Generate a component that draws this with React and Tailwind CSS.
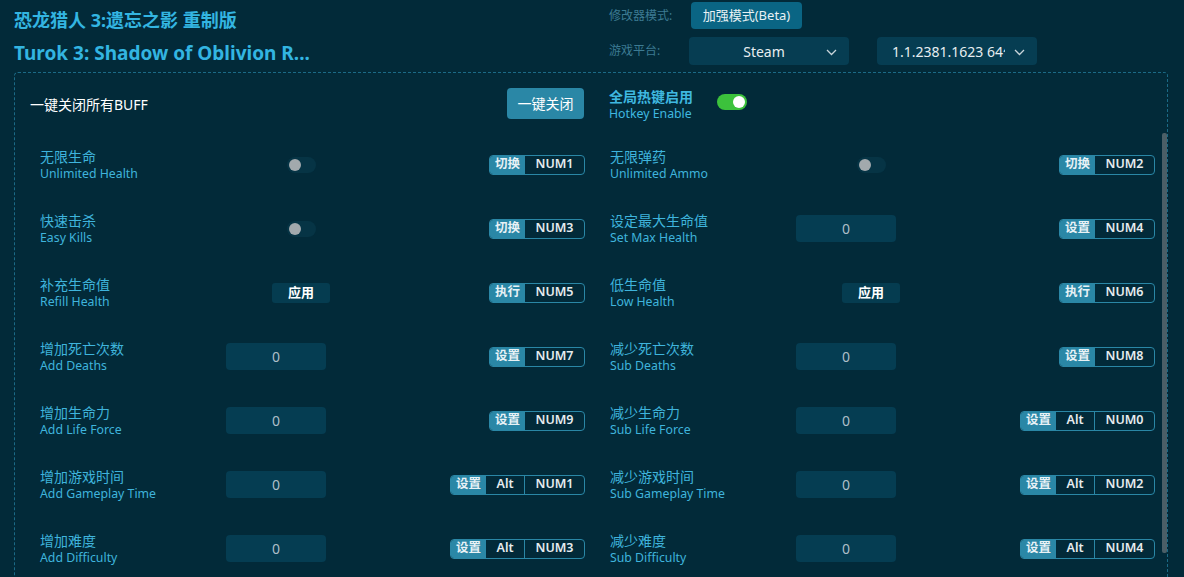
import React from "react";

const FONT = { fontFamily: '"Noto Sans", "Noto Sans CJK SC", sans-serif' };

const left = [
  { cn: "无限生命", en: "Unlimited Health", type: "toggle", keys: ["切换", "NUM1"] },
  { cn: "快速击杀", en: "Easy Kills", type: "toggle", keys: ["切换", "NUM3"] },
  { cn: "补充生命值", en: "Refill Health", type: "apply", keys: ["执行", "NUM5"] },
  { cn: "增加死亡次数", en: "Add Deaths", type: "input", keys: ["设置", "NUM7"] },
  { cn: "增加生命力", en: "Add Life Force", type: "input", keys: ["设置", "NUM9"] },
  { cn: "增加游戏时间", en: "Add Gameplay Time", type: "input", keys: ["设置", "Alt", "NUM1"] },
  { cn: "增加难度", en: "Add Difficulty", type: "input", keys: ["设置", "Alt", "NUM3"] },
];
const right = [
  { cn: "无限弹药", en: "Unlimited Ammo", type: "toggle", keys: ["切换", "NUM2"] },
  { cn: "设定最大生命值", en: "Set Max Health", type: "input", keys: ["设置", "NUM4"] },
  { cn: "低生命值", en: "Low Health", type: "apply", keys: ["执行", "NUM6"] },
  { cn: "减少死亡次数", en: "Sub Deaths", type: "input", keys: ["设置", "NUM8"] },
  { cn: "减少生命力", en: "Sub Life Force", type: "input", keys: ["设置", "Alt", "NUM0"] },
  { cn: "减少游戏时间", en: "Sub Gameplay Time", type: "input", keys: ["设置", "Alt", "NUM2"] },
  { cn: "减少难度", en: "Sub Difficulty", type: "input", keys: ["设置", "Alt", "NUM4"] },
];

function Chevron() {
  return (
    <svg width="11" height="7" viewBox="0 0 11 7" fill="none">
      <path d="M1 1l4.5 4.5L10 1" stroke="#c8d4da" strokeWidth="1.3" />
    </svg>
  );
}

function Hotkey({ keys }) {
  const [label, ...rest] = keys;
  return (
    <div className="flex h-[20px] rounded-[4px] border border-[#2a87a6] overflow-hidden">
      <div className="w-[35px] bg-[#2a87a6] text-[#e8f2f6] text-[12.5px] font-bold flex items-center justify-center">
        {label}
      </div>
      {rest.map((k, i) => (
        <div
          key={i}
          className={
            (k === "Alt" ? "w-[39px] border-r border-[#2a87a6] " : "w-[59px] ") +
            "text-[#e6ecef] text-[12.5px] font-semibold flex items-center justify-center"
          }
        >
          {k}
        </div>
      ))}
    </div>
  );
}

function Control({ type }) {
  if (type === "toggle")
    return (
      <div className="w-[150px] flex justify-center">
        <div className="w-[29px] h-[16px] rounded-full bg-[#063445] flex items-center px-[2px]">
          <div className="w-[12px] h-[12px] rounded-full bg-[#a2a9ad]" />
        </div>
      </div>
    );
  if (type === "apply")
    return (
      <div className="w-[150px] flex justify-center">
        <div className="w-[58px] h-[20px] rounded-[3px] bg-[#053c50] text-white text-[13px] font-bold flex items-center justify-center">
          应用
        </div>
      </div>
    );
  return (
    <div className="w-[150px] flex justify-start -mt-[1px]">
      <div className="w-[100px] h-[27px] rounded-[4px] bg-[#053d52] text-[#aebfc8] text-[14px] flex items-center justify-center">
        0
      </div>
    </div>
  );
}

function Row({ item }) {
  return (
    <div className="flex items-center h-[64px]">
      <div className="w-[186px] flex flex-col leading-[17px]">
        <span className="text-[14px] text-[#3fb4dc]">{item.cn}</span>
        <span className="text-[12.3px] text-[#3fb4dc]">{item.en}</span>
      </div>
      <Control type={item.type} />
      <div className="ml-auto -mt-[1px]">
        <Hotkey keys={item.keys} />
      </div>
    </div>
  );
}

export default function App() {
  return (
    <div className="w-[1184px] h-[577px] overflow-hidden bg-[#022a39] relative" style={FONT}>
      {/* header */}
      <div className="flex h-[72px]">
        <div className="pl-[14px] w-[609px]">
          <div className="text-[18px] font-bold text-[#33b5e1] leading-[22px] pt-[9px]">
            恐龙猎人 3:遗忘之影 重制版
          </div>
          <div className="text-[19px] font-bold text-[#33b5e1] leading-[24px] mt-[10px]">
            Turok 3: Shadow of Oblivion R...
          </div>
        </div>
        <div className="flex flex-col">
          <div className="flex items-center h-[27px] mt-[2px]">
            <span className="w-[82px] text-[12px] text-[#3c7b93]">修改器模式:</span>
            <div className="h-[27px] w-[111px] rounded-[4px] bg-[#0a6584] text-[13px] text-[#e8f1f4] flex items-center justify-center">
              加强模式(Beta)
            </div>
          </div>
          <div className="flex items-center h-[28px] mt-[8px]">
            <span className="w-[80px] text-[12px] text-[#3c7b93]">游戏平台:</span>
            <div className="relative h-[28px] w-[160px] rounded-[4px] bg-[#063d52] text-[14px] text-[#e6eef1] flex items-center justify-center">
              <span className="pr-[10px]">Steam</span>
              <span className="absolute right-[12px] top-[12px]"><Chevron /></span>
            </div>
            <div className="relative ml-[28px] h-[28px] w-[160px] rounded-[4px] bg-[#063d52] text-[14px] text-[#e6eef1] flex items-center">
              <span className="pl-[15px] w-[128px] overflow-hidden whitespace-nowrap">1.1.2381.1623 64位</span>
              <span className="absolute right-[12px] top-[12px]"><Chevron /></span>
            </div>
          </div>
        </div>
      </div>

      {/* main box */}
      <div className="relative ml-[14px] w-[1154px] h-[520px] border border-dashed border-[#1b6a86] rounded-[4px] pt-[14px]">
        {/* top row */}
        <div className="flex items-center h-[32px] pl-[15px]">
          <div className="w-[555px] flex items-center">
            <span className="text-[14px] text-white mt-[2px]">一键关闭所有BUFF</span>
            <div className="ml-auto mr-[1px] w-[77px] h-[31px] rounded-[4px] bg-[#2a87a6] text-white text-[14px] flex items-center justify-center">
              一键关闭
            </div>
          </div>
          <div className="ml-[24px] flex items-center mt-[3px]">
            <div className="flex flex-col leading-[17px]">
              <span className="text-[14px] font-bold text-[#3fb8e0]">全局热键启用</span>
              <span className="text-[12.3px] text-[#3fb8e0]">Hotkey Enable</span>
            </div>
            <div className="ml-[24px] w-[30px] h-[16px] rounded-full bg-[#3cc23c] flex items-center justify-end px-[2px] -mt-[6px]">
              <div className="w-[12px] h-[12px] rounded-full bg-white" />
            </div>
          </div>
        </div>

        {/* grid */}
        <div className="grid grid-cols-[545px_545px] gap-x-[25px] pl-[25px] mt-[14px]">
          <div className="flex flex-col">
            {left.map((it, i) => (
              <Row key={i} item={it} />
            ))}
          </div>
          <div className="flex flex-col">
            {right.map((it, i) => (
              <Row key={i} item={it} />
            ))}
          </div>
        </div>

        {/* scrollbar */}
        <div className="absolute right-[0px] top-[60px] w-[5px] h-[420px] rounded-[2px] bg-[#4b5f67]" />
      </div>
    </div>
  );
}
